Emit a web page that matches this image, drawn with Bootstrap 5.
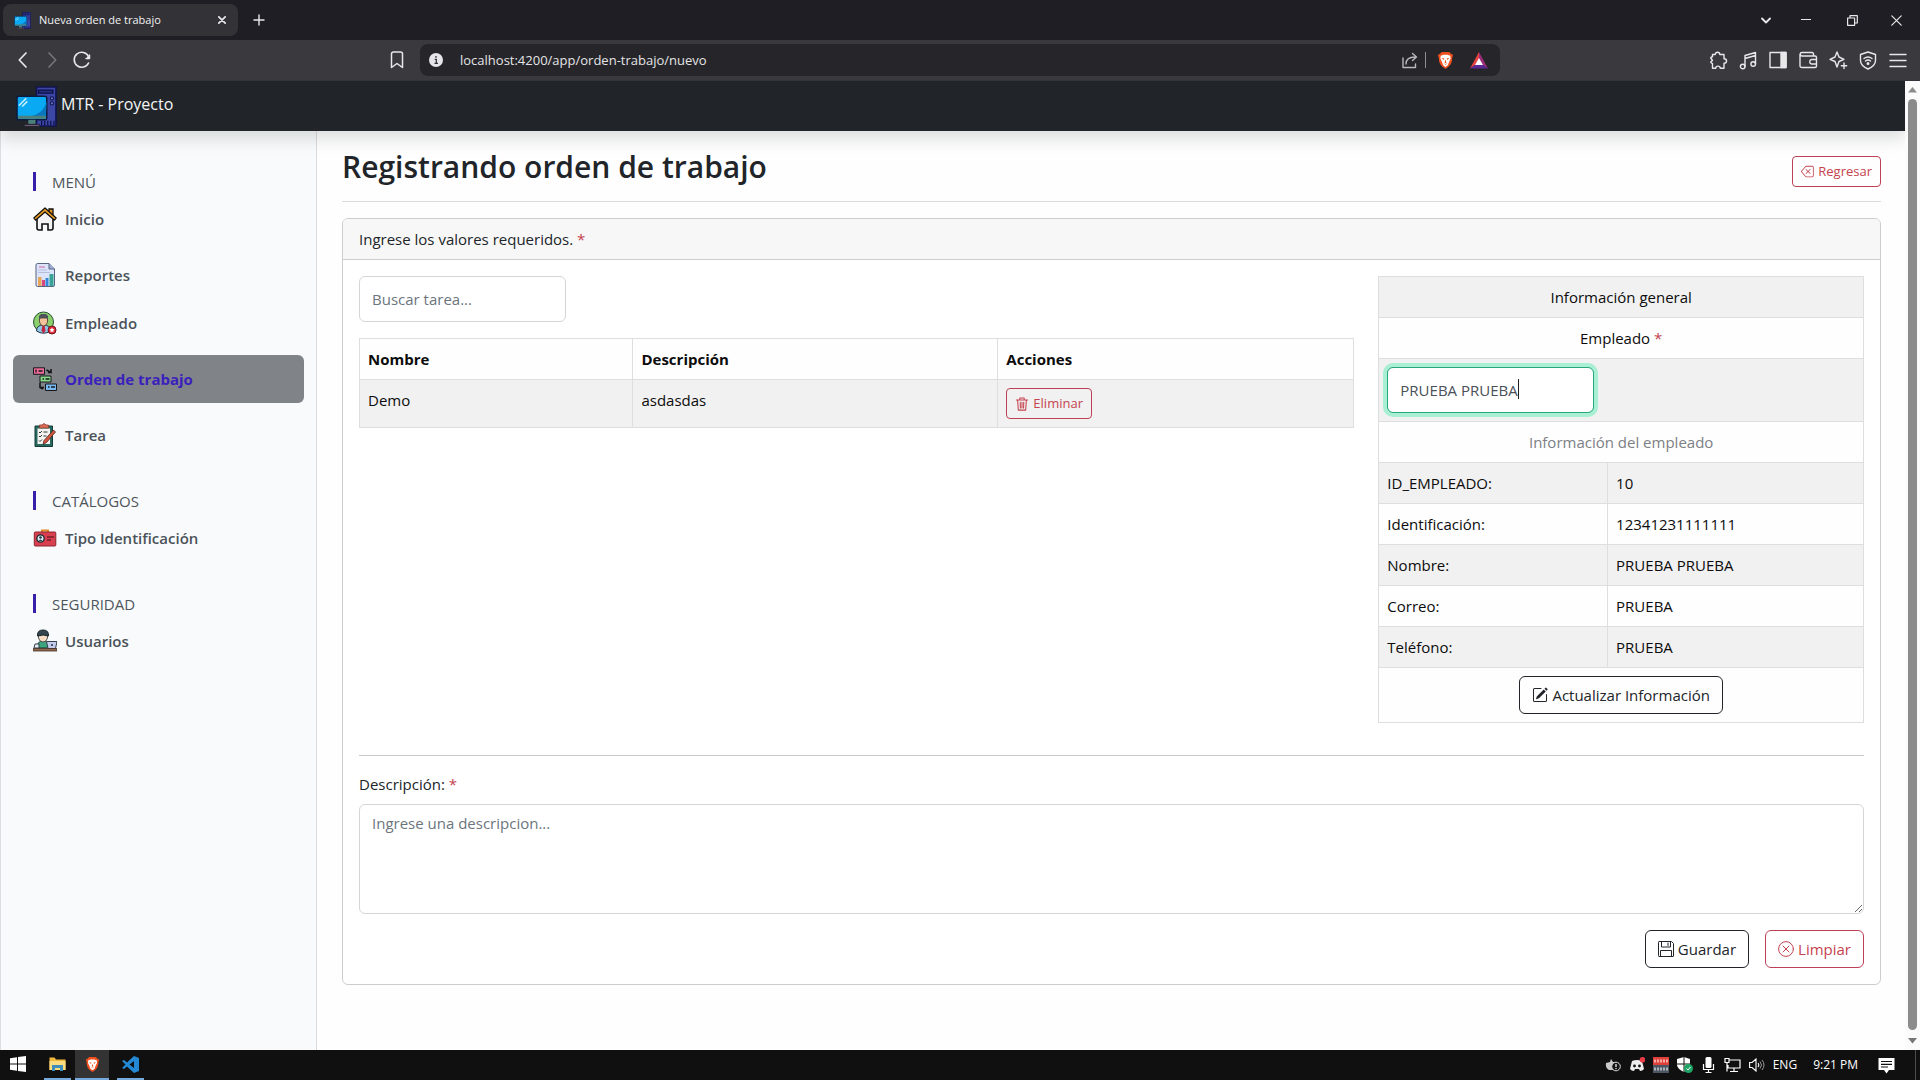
<!DOCTYPE html>
<html lang="es">
<head>
<meta charset="utf-8">
<meta name="viewport" content="width=device-width, initial-scale=1">
<title>Nueva orden de trabajo</title>
<link rel="stylesheet" href="https://cdn.jsdelivr.net/npm/bootstrap@5.3.0/dist/css/bootstrap.min.css">
<style>
body{font-family:"Open Sans","Noto Sans",sans-serif;font-size:15px;line-height:24px;background:#fefefe;color:#212529}
svg{display:block;flex:none}
.chrome-btn{background:none;border:0;padding:0;color:#e8e8ea;display:flex;align-items:center;justify-content:center;width:30px;height:32px}
.chrome-btn.off{color:#77767b}
.chrome-btn.dim{color:#b9b8bd}
.line{fill:none;stroke:currentColor;stroke-width:1.4;stroke-linecap:round;stroke-linejoin:round}
.tabstrip{background:#1f1e24;height:40px;padding:0 5px 0 3px;color:#f2f2f4}
.browser-tab{width:235px;height:32px;border-radius:8px;background:#333237;font-size:11px;padding:0 6px 0 11px}
.browser-tab .chrome-btn{width:20px}
.tab-new{width:34px}
.win-list{width:46px}
.win-min{width:34px}
.win-max{width:50px}
.win-close{width:38px}
.toolbar{background:#3a393e;height:41px;padding:0 7px;border-bottom:1px solid #33353a}
.nav-group{width:172px}
.address{width:1080px;height:32px;border-radius:8px;background:#26252a;color:#e4e4e6;padding:0 6px 0 8px;font-size:13px}
.address input{background:none;border:0;outline:0;color:#e4e4e6;font-size:13px;padding:0}
.app-nav{background:#212529;height:50px;padding:0 16px;position:relative;z-index:2}
.app-nav .navbar-brand{font-size:16px;color:#f4f5f6}
.side{width:317px;background:#f8fafb;border-left:1px solid #dcdfe2;border-right:1px solid #d9dcdf;padding:37px 12px 0}
.side-title{height:27px;margin:0 20px;padding-left:19px;display:flex;align-items:center;position:relative;color:#4f565d;font-size:15px;font-weight:500}
.side-title::before{content:"";width:3px;height:19px;background:#3a1fa8;position:absolute;left:0}
.group-gap{margin-top:28px}
.side-link{height:48px;padding:0 20px;gap:8px;border-radius:6px;color:#4b5259;font-weight:600;font-size:15px;display:flex;align-items:center;text-decoration:none}
.side-link.active{background:#808388;color:#3b1fbd;font-weight:700}
.page-title{font-size:30px;line-height:46px;font-weight:600;margin:0}
.main-area{padding:13px 24px 0 25px}
.title-rule{margin:11px 0 16px;opacity:.16}
.form-control{font-size:15px;line-height:24px;border-color:#d3d6d9;color:#495057;border-radius:6px}
.form-control::placeholder{color:#6c757d}
.search-box{width:207px;height:46px}
.search-box.current{border-color:#2ba67c;box-shadow:0 0 0 4px #a9efd3}
.caret{position:absolute;left:131px;top:12px;width:1px;height:20px;background:#222}
.req{color:#c5434f}
.card{border-color:#cbcdcf}
.card-header{background:#f7f7f7;border-color:#cbcdcf}
.table{--bs-table-striped-bg:#f1f1f1;--bs-table-bg:#fefefe;--bs-table-color:#0c0c0c;--bs-table-striped-color:#0c0c0c;border-color:#dcdee0}
.col-task{width:27.5%}
.col-desc{width:36.7%}
.col-key{width:47.2%}
.table .soft{color:#7c8085}
.btn{font-size:15px;line-height:24px;display:inline-flex;align-items:center;gap:4px}
.btn-sm{font-size:13px;line-height:21px}
.btn-outline-danger{--bs-btn-color:#c5434f;--bs-btn-border-color:#bd4056}
.scroller{width:15px;background:#fbfbfb}
.thumb{width:9px;border-radius:5px;background:#8b8b8b}
.taskbar{height:30px;background:#101010;color:#fff;font-size:12px}
.task-btn{width:27px;height:30px;border:0;background:none;padding:0;display:flex;align-items:center;justify-content:center;border-bottom:2px solid transparent}
.task-btn.start{width:36px}
.task-btn.open{border-color:#76a9dc}
.task-btn.front{background:#333;width:34px}
.tray{gap:8px}
.notice{margin:0 4px 0 12px}
</style>
<script src="https://cdn.jsdelivr.net/npm/bootstrap@5.3.0/dist/js/bootstrap.bundle.min.js"></script>
</head>
<body class="d-flex flex-column vh-100 overflow-hidden">
<svg width="0" height="0" class="position-absolute" aria-hidden="true">
  <symbol id="pc" viewBox="0 0 40 40"><path d="M20 1h19v38H20z" fill="#3c46a5" stroke="#101450" stroke-width="1.6"/><path d="M22 4h14v3H22z" fill="#273184" stroke="#0d1045" stroke-width="1.3"/><circle cx="35" cy="12" r="1.6" fill="#6d76cf" stroke="#0d1045"/><circle cx="35" cy="17" r="1.6" fill="#6d76cf" stroke="#0d1045"/><path d="M25 34v4m3-4v4m3-4v4m3-4v4m3-4v4" stroke="#0d1045" stroke-width="1.2"/><rect x="1" y="10" width="29" height="23" rx="2" fill="#0aa9f4" stroke="#0b1c40" stroke-width="1.5"/><path d="M30 15c-3 9-8 13-18 15h17z" fill="#0877c0"/><path d="M2 29h27v3H2z" fill="#4c807d"/><path d="M3 19l7-7M6 20l5-5" stroke="#c7efff" stroke-width="1.5"/><path d="M12 33h7v4h-7z" fill="#4c807d"/><path d="M8 37.500h15v2H8z" fill="#735b70" stroke="#1b2030" stroke-width=".8"/></symbol>
  <symbol id="lion" viewBox="0 0 18 20"><path d="M5 1h8l2 2 2 1-1 4c0 5-2 8-7 11C4 16 2 13 2 8L1 4l2-1z" fill="#f0501f"/><path d="M4 5l3-1h4l3 1 .5 3-2 4-1 3L9 17l-2.500-2-1-3-2-4z" fill="#fff"/><path d="M4.800 7l3 1-.8 1.500zM13.200 7l-3 1 .8 1.500zM9 9l1 3-1 .8-1-.8zM6.500 13L9 14.500l2.500-1.500L9 13.800z" fill="#f0501f"/></symbol>
</svg>

<header>
  <div class="tabstrip d-flex align-items-center">
    <div class="browser-tab d-flex align-items-center gap-2">
      <svg width="17" height="17"><use href="#pc"/></svg>
      <span class="flex-grow-1">Nueva orden de trabajo</span>
      <button class="chrome-btn" aria-label="Cerrar pestaña"><svg class="line" width="8" height="8" viewBox="0 0 8 8"><path stroke-width="1.700" d="M.8.800l6.400 6.400M7.200.800L.8 7.200"/></svg></button>
    </div>
    <button class="chrome-btn tab-new ms-1 me-auto" aria-label="Nueva pestaña"><svg class="line" width="12" height="12" viewBox="0 0 12 12"><path d="M6 1v10M1 6h10"/></svg></button>
    <button class="chrome-btn win-list" aria-label="Buscar pestañas"><svg class="line" width="10" height="7" viewBox="0 0 10 7"><path stroke-width="1.800" d="M1 1.500l4 4 4-4"/></svg></button>
    <button class="chrome-btn win-min" aria-label="Minimizar"><svg class="line" width="10" height="2"><path stroke-width="1" d="M0 .5h10"/></svg></button>
    <button class="chrome-btn win-max ms-1" aria-label="Restaurar"><svg class="line" width="11" height="11" viewBox="0 0 11 11"><path stroke-width="1.200" d="M.6 3h7v7.300h-7zM3 3V.7h7.300V8H7.600"/></svg></button>
    <button class="chrome-btn win-close" aria-label="Cerrar"><svg class="line" width="11" height="11" viewBox="0 0 11 11"><path stroke-width="1.200" d="M.8.800l9.400 9.400M10.200.800L.8 10.200"/></svg></button>
  </div>
  <div class="toolbar d-flex align-items-center">
    <div class="nav-group d-flex">
      <button class="chrome-btn" aria-label="Atrás"><svg class="line" width="9" height="16" viewBox="0 0 9 16"><path stroke-width="1.700" d="M8 1L1.300 8 8 15"/></svg></button>
      <button class="chrome-btn off" aria-label="Adelante"><svg class="line" width="9" height="16" viewBox="0 0 9 16"><path stroke-width="1.600" d="M1 1l6.700 7L1 15"/></svg></button>
      <button class="chrome-btn" aria-label="Recargar"><svg class="line" width="18" height="18" viewBox="0 0 18 18"><path stroke-width="1.600" d="M15.500 5.500A7.500 7.500 0 1 0 15.500 12"/><circle cx="15.500" cy="6.500" r="1.600" fill="currentColor" stroke="none"/><path d="M16.500 4v3.500H13"/></svg></button>
    </div>
    <button class="chrome-btn ms-auto me-2" aria-label="Marcador"><svg class="line" width="14" height="18" viewBox="0 0 14 18"><path stroke-width="1.500" d="M1.500 3Q1.500 1 3.500 1h7q2 0 2 2v13.500L7 12.500 1.500 16.500z"/></svg></button>
    <div class="address d-flex align-items-center">
      <svg width="16" height="16" viewBox="0 0 16 16"><circle cx="8" cy="8" r="7" fill="#e6e6ea"/><path d="M8 4v1.800M6.700 7.300H8.300v4M6.500 11.400h3.500" stroke="#333" stroke-width="1.300" fill="none"/></svg>
      <input class="flex-grow-1 ms-3" type="text" aria-label="Dirección" value="localhost:4200/app/orden-trabajo/nuevo">
      <button class="chrome-btn dim" aria-label="Compartir"><svg class="line" width="16" height="17" viewBox="0 0 16 17"><path d="M1 6v9.500h12.500V12M4 12c0-5 3-7 9-7M10.500 1.500L14.500 5l-4 3.500"/></svg></button>
      <span class="vr bg-light opacity-50 my-2"></span>
      <button class="chrome-btn ms-1" aria-label="Brave Shields"><svg width="17" height="19"><use href="#lion"/></svg></button>
      <button class="chrome-btn ms-1" aria-label="Rewards"><svg width="18" height="17" viewBox="0 0 18 17"><path d="M9 0L0 16.500l9-5.500z" fill="#e8443f"/><path d="M9 0l9 16.500L9 11z" fill="#9b2c77"/><path d="M0 16.500h18L9 10z" fill="#5a2a94"/><path d="M9 6l4 7H5z" fill="#fff"/></svg></button>
    </div>
    <button class="chrome-btn ms-auto" aria-label="Extensiones"><svg class="line" width="19" height="19" viewBox="0 0 19 19"><path d="M3.500 3.500h2.700c0-3 4.600-3 4.600 0H15v4.300c3.400 0 3.400 4.400 0 4.400v5h-3.800c0-2.800-4.400-2.800-4.400 0H3.500v-4.500c-1-.5-1.800-.7-1.800-1.600l1.800-1.600-1.800-2.500q.2-1 1.800-1.200z"/></svg></button>
    <button class="chrome-btn" aria-label="Música"><svg class="line" width="18" height="19" viewBox="0 0 18 19"><path d="M6 15.500V4.500L16.500 1.500v11M6 7.500l10.500-3"/><circle cx="3.700" cy="15.500" r="2.300"/><circle cx="14.200" cy="13" r="2.300"/></svg></button>
    <button class="chrome-btn" aria-label="Panel lateral"><svg class="line" width="18" height="18" viewBox="0 0 18 18"><path d="M1 1.500h16v15H1z"/><path d="M12 1.500h5v15h-5z" fill="currentColor"/></svg></button>
    <button class="chrome-btn" aria-label="Cartera"><svg class="line" width="19" height="18" viewBox="0 0 19 18"><path d="M14.500 5V3q0-1.500-1.500-1.500H3a1.700 1.700 0 0 0 0 3.500h13q1.500 0 1.500 1.500V15q0 1.500-1.500 1.500H3q-2 0-2-2V3M17.500 8.500H12.500a2.300 2.300 0 0 0 0 4.500h5z"/></svg></button>
    <button class="chrome-btn" aria-label="Leo IA"><svg class="line" width="19" height="19" viewBox="0 0 19 19"><path d="M8 1l2 5 5 2.300-5 2.200L8 16l-2-5.500L1 8.300 6 6zM15 12v5.500M12.300 14.800h5.400"/></svg></button>
    <button class="chrome-btn" aria-label="VPN"><svg class="line" width="18" height="19" viewBox="0 0 18 19"><path d="M9 1l7.500 2.500v6c0 4-3 6.500-7.500 8.500C4.500 16 1.500 13.500 1.500 9.500v-6zM5 7.500q4-3 8 0M6.500 10q2.500-2 5 0"/><circle cx="9" cy="12.500" r=".8" fill="currentColor"/></svg></button>
    <button class="chrome-btn" aria-label="Menú"><svg class="line" width="18" height="15" viewBox="0 0 18 15"><path d="M1 1.500h16M1 7.500h16M1 13.500h16"/></svg></button>
  </div>
</header>

<div class="d-flex flex-grow-1 overflow-hidden">
  <div class="d-flex flex-column flex-grow-1 overflow-hidden">
    <nav class="app-nav navbar shadow">
      <a class="navbar-brand d-flex align-items-center p-0 m-0" href="#"><svg class="me-1" width="41" height="41"><use href="#pc"/></svg><span class="pb-1">MTR - Proyecto</span></a>
    </nav>
    <div class="d-flex flex-grow-1">
      <aside class="side flex-shrink-0">
        <div class="side-title">MENÚ</div>
        <a class="side-link mb-2" href="#"><svg width="24" height="24" viewBox="0 0 24 24"><path d="M16 2h4v8h-4z" fill="#e29224" stroke="#111" stroke-width="1.300"/><path d="M4 11v10q0 2 2 2h3v-6h6v6h3q2 0 2-2V11l-8-7z" fill="#f3f3f5" stroke="#111" stroke-width="1.600"/><path d="M12 1L.8 11l1.700 2.200L12 5l9.500 8.200 1.700-2.200z" fill="#e99a24" stroke="#111" stroke-width="1.200" stroke-linejoin="round"/></svg>Inicio</a>
        <a class="side-link" href="#"><svg width="24" height="24" viewBox="0 0 24 24"><path d="M3 2q0-1.500 1.500-1.500H16L21.500 6v16q0 1.500-1.500 1.500H4.500Q3 23.500 3 22z" fill="#dbe4fa" stroke="#596382"/><path d="M16 .5V6h5.500" fill="#9fb1d6" stroke="#596382"/><path d="M6 4h6" stroke="#d4679b"/><path d="M5 7h9M5 9.500h12" stroke="#b5bfdb"/><path d="M5 14h3.500v9H5z" fill="#e9a558"/><path d="M9 17h3v6H9z" fill="#d6487e"/><path d="M12.500 15h3v8h-3z" fill="#3489db"/><path d="M16.500 11h4v12h-4z" fill="#38a495"/></svg>Reportes</a>
        <a class="side-link mb-2" href="#"><svg width="24" height="24" viewBox="0 0 24 24"><circle cx="10.500" cy="11" r="10" fill="#8bd06c" stroke="#275136"/><path d="M3.500 20q0-6 7-6t7 6q-7 4.500-14 0z" fill="#8ec5e5" stroke="#24344a"/><path d="M9.500 14.500h2l1 5-2 3-2-3z" fill="#c42440"/><path d="M6.500 7h8v4q-1 4-4 4t-4-4z" fill="#f4c39c" stroke="#4c342a" stroke-width=".8"/><path d="M6 9V5l2-2h5l2 2v4l-1.500-2H8z" fill="#4d5358"/><circle cx="19" cy="19" r="4" fill="#df2938" stroke="#6d1522"/><path d="M19 16.500l.8 1.600 1.700.3-1.200 1.200.3 1.700-1.600-.8-1.600.8.300-1.700-1.200-1.200 1.700-.3z" fill="#fff"/></svg>Empleado</a>
        <a class="side-link active mb-2" href="#"><svg width="24" height="24" viewBox="0 0 24 24" stroke="#15171c" stroke-width="1"><path d="M.5.800h11v6.500H.5z" fill="#ef6b98"/><path d="M7 9h11v6H7z" fill="#87db88"/><path d="M12.500 17h11v6.500h-11z" fill="#78b9f0"/><path d="M3 2.500v3M5.500 4h4M9.500 12h1.500m1.500 0h4M15 20h1.500M18 20h4" stroke-width="1.300"/><path d="M13.500 3l4.500 2.500V2M18 5.500h-3M7 15.500v5l3 1.500M7 20.500h4" fill="none" stroke-width="1.600"/></svg>Orden de trabajo</a>
        <a class="side-link" href="#"><svg width="24" height="24" viewBox="0 0 24 24"><path d="M2 3h17.500v20.500H2z" fill="#27695f" stroke="#143b38"/><path d="M4.500 5.500h12.500V21H4.500z" fill="#f4f3ef"/><path d="M6.500 4V2H9q2-3 4 0h2.500v3h-9z" fill="#dc6b56" stroke="#893e34" stroke-width=".8"/><path d="M6 9l1 1 2-2M6 13l1 1 2-2M6 17.500l1 1 2-2M10.500 9h4M10.500 13h3" stroke="#30363b" fill="none"/><path d="M20.500 7l2 2-9 10.500-3.500 2 1-4z" fill="#d1553f" stroke="#512723" stroke-width=".8"/></svg>Tarea</a>
        <div class="side-title group-gap">CATÁLOGOS</div>
        <a class="side-link" href="#"><svg width="24" height="24" viewBox="0 0 24 24"><path d="M9 7V4.500h6V7" fill="none" stroke="#e18b25" stroke-width="2"/><rect x="1.300" y="6" width="21.500" height="14" rx="1" fill="#d9404f" stroke="#8c2430"/><circle cx="7.500" cy="12.500" r="4.300" fill="#172932"/><circle cx="7.500" cy="12.500" r="3" fill="#dceef0"/><circle cx="7.500" cy="11.500" r="1.300" fill="#263c45"/><path d="M5.500 15q2-3 4 0z" fill="#263c45"/><path d="M14 11h7M14 14h4" stroke="#76202c" stroke-width="1.400"/></svg>Tipo Identificación</a>
        <div class="side-title group-gap">SEGURIDAD</div>
        <a class="side-link" href="#"><svg width="24" height="24" viewBox="0 0 24 24"><path d="M4 19q0-7 6-7t6 7z" fill="#3ca57d" stroke="#19352f"/><path d="M5.500 4h9v5q-1 4-4.500 4T5.500 9z" fill="#f8dcc4" stroke="#2c3438" stroke-width=".8"/><path d="M4.500 7Q4 1 10 1t5.500 6q-5-2-11 0z" fill="#33464f" stroke="#182329"/><path d="M1 19l1-4h4v4z" fill="#e9eef4" stroke="#33404d"/><path d="M13.500 12.500H24l-1.500 7H15z" fill="#c3ccec" stroke="#33404d"/><circle cx="19" cy="16" r="1" fill="#26313c"/><path d="M0 19.500h24V22H0z" fill="#91684d" stroke="#453329" stroke-width=".8"/></svg>Usuarios</a>
      </aside>

      <main class="main-area flex-grow-1">
        <div class="d-flex justify-content-between align-items-center">
          <h1 class="page-title">Registrando orden de trabajo</h1>
          <button type="button" class="btn btn-sm btn-outline-danger mt-2"><svg width="13" height="13" viewBox="0 0 16 16" fill="currentColor"><path d="M5.830 5.146a.5.5 0 0 0 0 .708L7.975 8l-2.147 2.146a.5.5 0 0 0 .707.708l2.147-2.147 2.146 2.147a.5.5 0 0 0 .707-.708L9.390 8l2.146-2.146a.5.5 0 0 0-.707-.708L8.683 7.293 6.536 5.146a.5.5 0 0 0-.707 0z"/><path d="M13.683 1a2 2 0 0 1 2 2v10a2 2 0 0 1-2 2h-7.080a2 2 0 0 1-1.519-.698L.241 8.650a1 1 0 0 1 0-1.302L5.084 1.700A2 2 0 0 1 6.603 1h7.080zm-7.080 1a1 1 0 0 0-.76.350L1 8l4.844 5.650a1 1 0 0 0 .759.350h7.080a1 1 0 0 0 1-1V3a1 1 0 0 0-1-1h-7.080z"/></svg>Regresar</button>
        </div>
        <hr class="title-rule">
        <form class="card">
          <div class="card-header">Ingrese los valores requeridos. <span class="req">*</span></div>
          <div class="card-body">
            <div class="row">
              <div class="col-8">
                <input class="form-control search-box mb-3" type="text" placeholder="Buscar tarea..." aria-label="Buscar tarea">
                <table class="table table-bordered table-striped">
                  <colgroup><col class="col-task"><col class="col-desc"><col></colgroup>
                  <thead><tr><th>Nombre</th><th>Descripción</th><th>Acciones</th></tr></thead>
                  <tbody><tr>
                    <td>Demo</td><td>asdasdas</td>
                    <td><button type="button" class="btn btn-sm btn-outline-danger"><svg class="line" width="14" height="14" viewBox="0 0 16 16"><path stroke-width="1.200" d="M1.500 3.500h13M5.500 3.300V1.200h5v2.100M3 3.500l.8 11.500h8.400L13 3.500M6 6l.2 6.500M8 6v6.500M10 6l-.2 6.500"/></svg>Eliminar</button></td>
                  </tr></tbody>
                </table>
              </div>
              <div class="col-4">
                <table class="table table-bordered table-striped">
                  <colgroup><col class="col-key"><col></colgroup>
                  <tbody>
                    <tr><td colspan="2" class="text-center">Información general</td></tr>
                    <tr><td colspan="2" class="text-center"><label for="empleado">Empleado <span class="req">*</span></label></td></tr>
                    <tr><td colspan="2"><div class="position-relative"><input id="empleado" class="form-control search-box current" type="text" value="PRUEBA PRUEBA"><span class="caret"></span></div></td></tr>
                    <tr><td colspan="2" class="text-center soft">Información del empleado</td></tr>
                    <tr><td>ID_EMPLEADO:</td><td>10</td></tr>
                    <tr><td>Identificación:</td><td>12341231111111</td></tr>
                    <tr><td>Nombre:</td><td>PRUEBA PRUEBA</td></tr>
                    <tr><td>Correo:</td><td>PRUEBA</td></tr>
                    <tr><td>Teléfono:</td><td>PRUEBA</td></tr>
                    <tr><td colspan="2" class="text-center"><button type="button" class="btn btn-outline-dark"><svg width="16" height="16" viewBox="0 0 16 16" fill="currentColor"><path d="M15.502 1.940a.5.5 0 0 1 0 .706L14.459 3.690l-2-2L13.502.646a.5.5 0 0 1 .707 0l1.293 1.293zm-1.750 2.456-2-2L4.939 9.210a.5.5 0 0 0-.121.196l-.805 2.414a.25.250 0 0 0 .316.316l2.414-.805a.5.5 0 0 0 .196-.120l6.813-6.814z"/><path fill-rule="evenodd" d="M1 13.500A1.500 1.500 0 0 0 2.500 15h11a1.500 1.500 0 0 0 1.500-1.500v-6a.5.5 0 0 0-1 0v6a.5.5 0 0 1-.5.500h-11a.5.5 0 0 1-.5-.500v-11a.5.5 0 0 1 .5-.500H9a.5.5 0 0 0 0-1H2.500A1.500 1.500 0 0 0 1 2.500v11z"/></svg>Actualizar Información</button></td></tr>
                  </tbody>
                </table>
              </div>
            </div>
            <hr>
            <label class="mb-2" for="descripcion">Descripción: <span class="req">*</span></label>
            <textarea id="descripcion" class="form-control" rows="4" placeholder="Ingrese una descripcion..."></textarea>
            <div class="d-flex justify-content-end gap-3 mt-3">
              <button type="submit" class="btn btn-outline-dark"><svg class="line" width="16" height="16" viewBox="0 0 16 16"><path stroke-width="1" d="M.5 1q0-.5.5-.5h12.500l2 2V15q0 .5-.5.500H1q-.5 0-.5-.5zM3.500.5v5.500h9V.5M10 2v2.500M2.500 15.500v-6h11v6"/></svg>Guardar</button>
              <button type="reset" class="btn btn-outline-danger"><svg class="line" width="16" height="16" viewBox="0 0 16 16"><path stroke-width="1" d="M5 5l6 6M11 5l-6 6"/><circle cx="8" cy="8" r="7.400" stroke-width="1"/></svg>Limpiar</button>
            </div>
          </div>
        </form>
      </main>
    </div>
  </div>
  <div class="scroller flex-shrink-0 d-flex flex-column align-items-center" aria-hidden="true">
    <svg class="my-1" width="9" height="10" viewBox="0 0 9 10"><path d="M4.500 2L9 7.500H0z" fill="#8b8b8b"/></svg>
    <div class="thumb flex-grow-1"></div>
    <svg class="my-1" width="9" height="12" viewBox="0 0 9 12"><path d="M4.500 9.500L9 4H0z" fill="#777"/></svg>
  </div>
</div>

<footer class="taskbar d-flex align-items-stretch flex-shrink-0">
  <button class="task-btn start" aria-label="Inicio"><svg width="16" height="16" viewBox="0 0 16 16"><path d="M0 2.300L7 1.200v6.300H0zM8 1l8-1v7.500H8zM0 8.500h7v6.300l-7-1zM8 8.500h8V16l-8-1.100z" fill="#fff"/></svg></button>
  <button class="task-btn open ms-2" aria-label="Explorador"><svg width="17" height="16" viewBox="0 0 17 16"><path d="M.5 1.500h5l1.500 2h9.500V14H.5z" fill="#f0b93b"/><path d="M.5 5h16v9H.5z" fill="#fbdc80"/><path d="M3 15V9h11v6h-3v-3H6v3z" fill="#3d8ebb"/></svg></button>
  <button class="task-btn open front ms-1" aria-label="Brave"><svg width="15" height="17"><use href="#lion"/></svg></button>
  <button class="task-btn open ms-2" aria-label="Visual Studio Code"><svg width="17" height="17" viewBox="0 0 17 17"><path d="M12 0l5 2v13l-5 2-7-6.500-3 2.500-2-1L3.500 8.500 0 5l2-1 3 2.500zM12 5L7.500 8.500 12 12z" fill="#2389d5"/></svg></button>
  <div class="tray d-flex align-items-center ms-auto">
    <svg width="16" height="16" viewBox="0 0 16 16"><path d="M1 6l4-1 1-3 2 3h3l-2 8H4Q0 11 1 6z" fill="#c9c9c9"/><circle cx="11" cy="9.500" r="4.300" fill="#151515" stroke="#ddd"/><path d="M11 7v3M11 11v1" stroke="#eee" stroke-width="1.300"/></svg>
    <svg width="16" height="16" viewBox="0 0 16 16"><path d="M3 4q5-2 10 0l2 8q-1.500 2-4 2l-1-2H6l-1 2q-2.500 0-4-2z" fill="#ededed"/><circle cx="5.500" cy="9" r="1.400" fill="#111"/><circle cx="10.500" cy="9" r="1.400" fill="#111"/><circle cx="13.500" cy="2.800" r="2.800" fill="#ea3b45"/></svg>
    <svg width="16" height="16" viewBox="0 0 16 16"><path d="M0 0h16v8H0z" fill="#df4039"/><path d="M0 8h16v8H0z" fill="#4b5660"/><path d="M1 4h14" stroke="#f8aaa5" stroke-width="3" stroke-dasharray="2 1"/><path d="M1 12h14" stroke="#aab3bc" stroke-width="3" stroke-dasharray="2 1"/></svg>
    <svg width="16" height="16" viewBox="0 0 16 16"><path d="M7 0l6 2v5c0 4-3 6-6 8-4-2-7-4-7-8V2z" fill="#fff"/><path d="M7 0v15M0 7h13" stroke="#111"/><circle cx="11.500" cy="11.500" r="4.500" fill="#1fa565"/><path d="M9.500 11.500l1.500 1.500 2.500-3" stroke="#fff" fill="none"/></svg>
    <svg width="15" height="18" viewBox="0 0 15 18"><rect x="4.500" y="1" width="6" height="11" rx="1.500" fill="#fff"/><path d="M2.500 8v5.500h10V8M7.500 13.500V16M4.500 16.500h6" stroke="#fff" fill="none" stroke-width="1.200"/></svg>
    <svg width="17" height="16" viewBox="0 0 17 16"><path d="M5 3h11v8H4V8M10 11v3M6 14.500h8M1 1.500h4v4H1zM3 5.500v9" stroke="#fff" fill="none" stroke-width="1.200"/></svg>
    <svg width="16" height="14" viewBox="0 0 16 14"><path d="M.6 4.500h2.500L7 1v12L3.100 9.500H.6zM9 5q1.500 2 0 4" stroke="#fff" fill="none" stroke-width="1.100"/><path d="M11 3.500q3 3.500 0 7M13 2q4 5 0 10" stroke="#999" fill="none"/></svg>
    <span>ENG</span>
    <span class="ms-2">9:21 PM</span>
    <svg class="notice" width="17" height="17" viewBox="0 0 17 17"><path d="M.5 1h16v12H11l-2.500 3.500L6 13H.5z" fill="#fff"/><path d="M3 4.500h11M3 7.300h11M3 10h7" stroke="#111" stroke-width="1.200"/></svg>
    <span class="vr ms-2 me-1"></span>
  </div>
</footer>
</body>
</html>
